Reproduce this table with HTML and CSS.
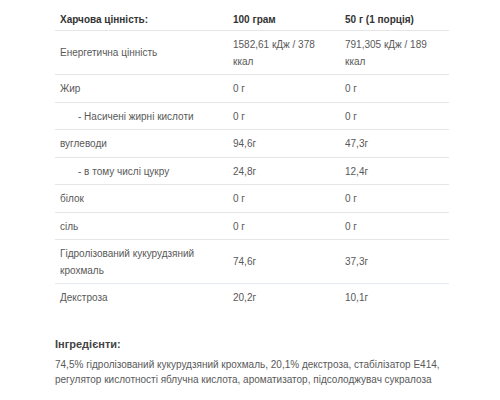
FILE: index.html
```html
<!DOCTYPE html>
<html lang="uk">
<head>
  <meta charset="UTF-8">
  <meta name="viewport" content="width=device-width, initial-scale=1.0">
  <title>Харчова цінність</title>
  <link rel="stylesheet" href="styles.css">
</head>
<body>
  <div class="wrap">
    <!-- Nutrition table -->
    <table class="nutrition">
      <colgroup>
        <col class="col-name">
        <col class="col-100">
        <col class="col-portion">
      </colgroup>
      <thead>
        <tr>
          <th>Харчова цінність:</th>
          <th>100 грам</th>
          <th>50 г (1 порція)</th>
        </tr>
      </thead>
      <tbody>
        <tr>
          <td>Енергетична цінність</td>
          <td>1582,61 кДж / 378 ккал</td>
          <td>791,305 кДж / 189 ккал</td>
        </tr>
        <tr>
          <td>Жир</td>
          <td>0 г</td>
          <td>0 г</td>
        </tr>
        <tr>
          <td class="sub">- Насичені жирні кислоти</td>
          <td>0 г</td>
          <td>0 г</td>
        </tr>
        <tr>
          <td>вуглеводи</td>
          <td>94,6г</td>
          <td>47,3г</td>
        </tr>
        <tr>
          <td class="sub">- в тому числі цукру</td>
          <td>24,8г</td>
          <td>12,4г</td>
        </tr>
        <tr>
          <td>білок</td>
          <td>0 г</td>
          <td>0 г</td>
        </tr>
        <tr>
          <td>сіль</td>
          <td>0 г</td>
          <td>0 г</td>
        </tr>
        <tr class="tinted">
          <td>Гідролізований кукурудзяний крохмаль</td>
          <td>74,6г</td>
          <td>37,3г</td>
        </tr>
        <tr class="last">
          <td>Декстроза</td>
          <td>20,2г</td>
          <td>10,1г</td>
        </tr>
      </tbody>
    </table>

    <!-- Ingredients -->
    <div class="ingredients">
      <h3>Інгредієнти:</h3>
      <p>74,5% гідролізований кукурудзяний крохмаль, 20,1% декстроза, стабілізатор Е414, регулятор кислотності яблучна кислота, ароматизатор, підсолоджувач сукралоза</p>
    </div>
  </div>
</body>
</html>
```

FILE: styles.css
```css
body {
  margin: 0;
  padding: 0;
  background-color: #fff;
  font-family: "Liberation Sans", Arial, sans-serif;
  color: #595959;
}

.wrap {
  width: 394px;
  padding-left: 55px;
}

/* Nutrition table */
.nutrition {
  width: 394px;
  border-collapse: collapse;
  table-layout: fixed;
  font-size: 10px;
  line-height: 16.5px;
}
.col-name {
  width: 173px;
}
.col-100 {
  width: 112px;
}
.col-portion {
  width: 109px;
}
.nutrition th {
  text-align: left;
  font-weight: bold;
  color: #333;
  padding: 12px 5px 1.5px;
  border-bottom: 1px solid #e6e6e6;
}
.nutrition td {
  text-align: left;
  vertical-align: middle;
  padding: 6px 5px 4px;
  border-bottom: 1px solid #e6e6e6;
}
.nutrition td.sub {
  padding-left: 23px;
}
.nutrition tr.tinted td {
  border-bottom-color: #e4eaef;
}
.nutrition tr.last td {
  border-bottom: none;
}

/* Ingredients */
.ingredients {
  margin-top: 25px;
}
.ingredients h3 {
  margin: 0 0 5px;
  font-size: 11px;
  line-height: 16px;
  color: #444;
}
.ingredients p {
  margin: 0;
  font-size: 10px;
  line-height: 15px;
}
```
